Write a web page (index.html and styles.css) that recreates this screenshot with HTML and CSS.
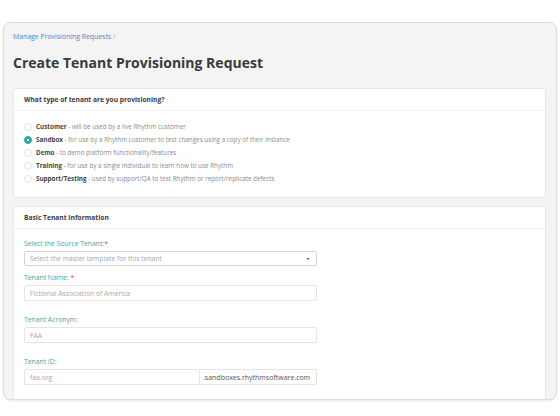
FILE: index.html
```html
<!DOCTYPE html>
<html>
<head>
<meta charset="utf-8">
<link rel="stylesheet" href="styles.css">
</head>
<body>
<div class="frame">
  <div class="crumbs"><a class="crumb-link">Manage Provisioning Requests</a><span class="crumb-sep"> /</span></div>
  <h1 class="title">Create Tenant Provisioning Request</h1>

  <section class="card">
    <div class="card-head">What type of tenant are you provisioning?</div>
    <div class="card-body radios">
      <div class="radio"><span class="dot"></span><span class="rtext"><b>Customer</b><span class="desc"> - will be used by a live Rhythm customer</span></span></div>
      <div class="radio"><span class="dot on"></span><span class="rtext"><b>Sandbox</b><span class="desc"> - for use by a Rhythm customer to test changes using a copy of their instance</span></span></div>
      <div class="radio"><span class="dot"></span><span class="rtext"><b>Demo</b><span class="desc"> - to demo platform functionality/features</span></span></div>
      <div class="radio"><span class="dot"></span><span class="rtext"><b>Training</b><span class="desc"> - for use by a single individual to learn how to use Rhythm</span></span></div>
      <div class="radio"><span class="dot"></span><span class="rtext"><b>Support/Testing</b><span class="desc"> - used by support/QA to test Rhythm or report/replicate defects</span></span></div>
    </div>
  </section>

  <section class="card card-2">
    <div class="card-head">Basic Tenant Information</div>
    <div class="card-body fields">
      <div class="field field-select">
        <div class="label">Select the Source Tenant:<span class="req">*</span></div>
        <div class="box select"><span class="ph">Select the master template for this tenant</span><span class="caret"></span></div>
      </div>
      <div class="field">
        <div class="label">Tenant Name: <span class="req">*</span></div>
        <div class="box"><span class="ph">Fictional Association of America</span></div>
      </div>
      <div class="field">
        <div class="label">Tenant Acronym:</div>
        <div class="box"><span class="ph">FAA</span></div>
      </div>
      <div class="field">
        <div class="label">Tenant ID:</div>
        <div class="group">
          <div class="box box-id"><span class="ph">faa.org</span></div>
          <div class="box addon">.sandboxes.rhythmsoftware.com</div>
        </div>
      </div>
    </div>
  </section>
</div>
</body>
</html>
```

FILE: styles.css
```css
* { box-sizing: border-box; }
html, body { margin: 0; padding: 0; background: #ffffff; }
body {
  font-family: "Open Sans", "Liberation Sans", sans-serif;
  color: #444;
  width: 560px;
  height: 416px;
  overflow: hidden;
}
.frame {
  margin: 22px 3px 0 3px;
  height: 378px;
  border: 1px solid #dcdce6;
  border-radius: 8px;
  background: #f4f4f5;
  overflow: hidden;
  padding: 10px 10px 0 9px;
  box-shadow: 0 1px 2px rgba(180,180,200,0.35);
}
.crumbs {
  font-size: 6.9px;
  line-height: 8px;
}
.crumb-link { color: #4a86c8; }
.crumb-sep { color: #aaa; }
.title {
  margin: 12px 0 0 0;
  font-size: 14px;
  line-height: 20px;
  font-weight: 700;
  color: #3a3a3a;
}
.card {
  background: #fff;
  border: 1px solid #e7e7ea;
  border-radius: 2px;
  margin-top: 15px;
}
.card-2 { margin-top: 8px; }
.card-head {
  height: 22px;
  line-height: 21px;
  padding-left: 10px;
  font-size: 6.7px;
  font-weight: 700;
  color: #3d3d3d;
  border-bottom: 1px solid #efeff1;
}
.radios { padding: 9px 10px 12px 10px; }
.radio {
  display: flex;
  align-items: center;
  height: 13px;
  font-size: 6.3px;
  white-space: nowrap;
}
.radio b { color: #454545; font-weight: 700; }
.desc { color: #8c8c8c; }
.dot {
  width: 8px;
  height: 8px;
  border-radius: 50%;
  border: 1px solid #e2e2e2;
  background: #fff;
  margin-right: 4px;
  flex: none;
}
.dot.on {
  background: #2fa8a4;
  border-color: #2fa8a4;
  position: relative;
}
.dot.on::after {
  content: "";
  position: absolute;
  left: 2px; top: 2px;
  width: 2px; height: 2px;
  border-radius: 50%;
  background: #fff;
}
.fields { padding: 11px 228px 0 10px; }
.field { margin-bottom: 15px; }
.field-select { margin-bottom: 8px; }
.label {
  font-size: 6.8px;
  line-height: 8px;
  color: #4aa6a2;
  margin-bottom: 3px;
  white-space: nowrap;
}
.req { color: #e04848; }
.box {
  height: 16px;
  border: 1px solid #e4e4e6;
  border-radius: 2px;
  background: #fff;
  display: flex;
  align-items: center;
  padding-left: 5px;
  font-size: 6.8px;
  white-space: nowrap;
}
.select {
  height: 15px;
  border-color: #d4d4d8;
  justify-content: space-between;
  padding-right: 6px;
}
.ph { color: #a8a8a8; }
.caret {
  width: 0; height: 0;
  border-left: 2px solid transparent;
  border-right: 2px solid transparent;
  border-top: 2px solid #777;
}
.group { display: flex; }
.box-id { flex: 1; border-radius: 2px 0 0 2px; }
.addon {
  width: 117px;
  flex: none;
  color: #555;
  border-left: none;
  border-radius: 0 2px 2px 0;
  padding-left: 3px;
  font-size: 7px;
}
```
